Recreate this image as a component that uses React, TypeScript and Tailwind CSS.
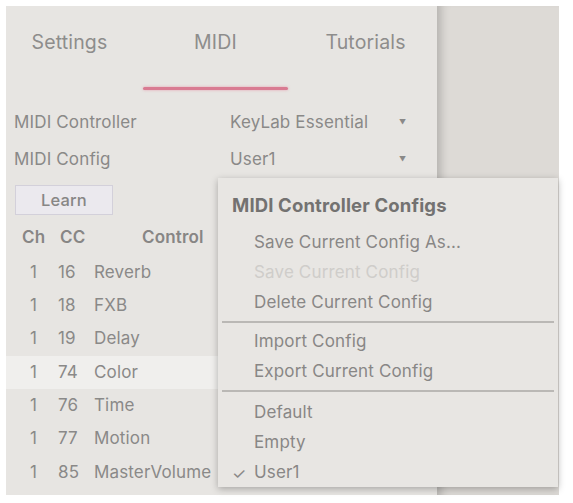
import { useState } from "react";

const rows = [
  { ch: 1, cc: 16, name: "Reverb" },
  { ch: 1, cc: 18, name: "FXB" },
  { ch: 1, cc: 19, name: "Delay" },
  { ch: 1, cc: 74, name: "Color" },
  { ch: 1, cc: 76, name: "Time" },
  { ch: 1, cc: 77, name: "Motion" },
  { ch: 1, cc: 85, name: "MasterVolume" },
];

function MenuItem({
  label,
  disabled,
  checked,
}: {
  label: string;
  disabled?: boolean;
  checked?: boolean;
}) {
  return (
    <div
      className={`relative flex h-[30px] items-center pl-[36px] ${
        disabled ? "text-[#cfcdca]" : "text-[#888786]"
      }`}
    >
      {checked && <span className="absolute left-[14px] text-[16px] text-[#8a8988]">✓</span>}
      {label}
    </div>
  );
}

function Separator() {
  return <div className="mx-1 h-[2px] bg-[#bab8b5]" />;
}

export default function App() {
  const [tab] = useState("MIDI");
  const highlighted = 74;

  return (
    <div
      className="relative h-[503px] w-[573px] overflow-hidden bg-white pl-[6px] pt-[6px] text-[17px] tracking-[0.15px] text-[#8a8988]"
      style={{ fontFamily: "Inter, 'Noto Sans', sans-serif" }}
    >
      <div className="flex h-[489px]">
        {/* Left panel */}
        <div className="flex w-[431px] flex-col bg-[#e7e5e2]">
          {/* Tabs */}
          <div className="flex pt-[24px] text-[19.5px] text-[#8e8d8c]">
            {["Settings", "MIDI", "Tutorials"].map((t, i) => (
              <div
                key={t}
                className={`flex flex-col items-center ${
                  i === 0 ? "w-[137px] pr-[10px]" : i === 1 ? "w-[145px]" : "flex-1 pl-[6px]"
                }`}
              >
                <span className="leading-6">{t}</span>
                <div
                  className={`mt-[33px] h-[3px] w-full rounded-full ${
                    tab === t ? "bg-[#d97b92] shadow-[0_0_3px_rgba(230,120,150,0.6)]" : ""
                  }`}
                />
              </div>
            ))}
          </div>

          {/* Controller / config */}
          <div className="mt-[15px] flex h-[36px] items-center pl-[8px]">
            <span className="w-[216px]">MIDI Controller</span>
            <span className="w-[169px]">KeyLab Essential</span>
            <span className="text-[7px] text-[#8a8988]">▼</span>
          </div>
          <div className="flex h-[38px] items-center pl-[8px]">
            <span className="w-[216px]">MIDI Config</span>
            <span className="w-[169px]">User1</span>
            <span className="text-[7px] text-[#8a8988]">▼</span>
          </div>

          <div className="pl-[9px] pt-[6px]">
            <button className="h-[30px] w-[98px] border border-[#d3d0da] bg-[#ebe9ee] text-[16.5px] font-medium text-[#878685]">
              Learn
            </button>
          </div>

          {/* Table header */}
          <div className="mt-[6px] flex h-[33px] items-center font-semibold text-[#878685]">
            <span className="w-[52px] pl-[16px]">Ch</span>
            <span className="w-[84px] pl-[2px]">CC</span>
            <span>Control</span>
          </div>

          {/* Rows */}
          <div className="mt-[2px] flex flex-col">
            {rows.map((r) => (
              <div
                key={r.cc}
                className={`flex h-[33.3px] items-center ${
                  r.cc === highlighted ? "bg-[#f0efed]" : ""
                }`}
              >
                <span className="w-[52px] pl-[24px]">{r.ch}</span>
                <span className="w-[36px]">{r.cc}</span>
                <span>{r.name}</span>
              </div>
            ))}
          </div>
        </div>

        {/* Right panel */}
        <div className="w-[122px] bg-[#dddad6] shadow-[inset_10px_0_8px_-6px_rgba(0,0,0,0.18)]" />
      </div>

      {/* Dropdown menu */}
      <div className="absolute left-[218px] top-[178px] h-[309px] w-[340px] bg-[#e8e6e3] pt-[14px] shadow-[0_2px_7px_rgba(0,0,0,0.28)]">
        <div className="mb-[8px] flex h-[28px] items-center pl-[14px] text-[18.5px] font-bold text-[#737271]">
          MIDI Controller Configs
        </div>
        <MenuItem label="Save Current Config As..." />
        <MenuItem label="Save Current Config" disabled />
        <MenuItem label="Delete Current Config" />
        <div className="mb-[4px] mt-[3px]">
          <Separator />
        </div>
        <MenuItem label="Import Config" />
        <MenuItem label="Export Current Config" />
        <div className="mb-[6px] mt-[3px]">
          <Separator />
        </div>
        <MenuItem label="Default" />
        <MenuItem label="Empty" />
        <MenuItem label="User1" checked />
      </div>
    </div>
  );
}
